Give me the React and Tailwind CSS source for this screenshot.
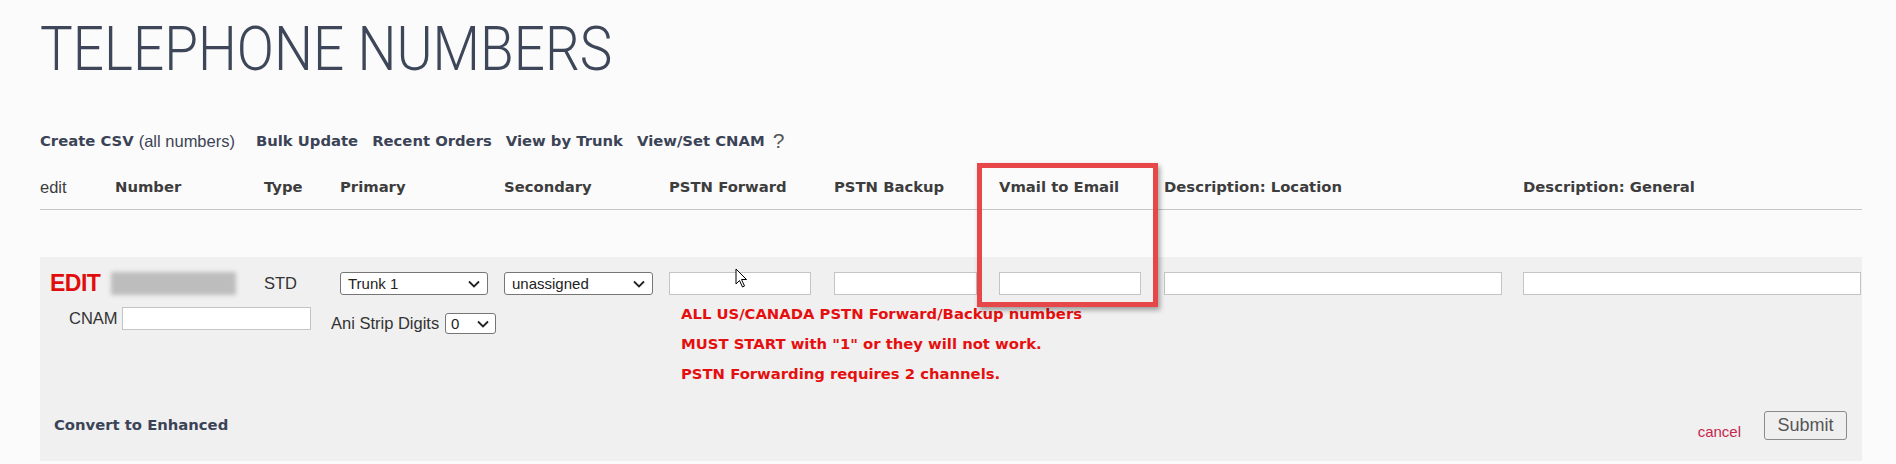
import React from "react";

const cols = "grid grid-cols-[75px_149px_76px_164px_165px_165px_165px_165px_359px_339px]";
const bold = { fontFamily: '"DejaVu Sans", Verdana, sans-serif' };

function Select({ value, w }) {
  return (
    <div className={`relative h-[23px] ${w} rounded-[3px] border border-[#767676] bg-white`}>
      <span className="absolute left-[7px] top-[2px] text-[15px] leading-[18px] text-[#222]">{value}</span>
      <svg className="absolute right-[7px] top-[7px]" width="12" height="8" viewBox="0 0 12 8">
        <path d="M1 1.5 L6 6.5 L11 1.5" fill="none" stroke="#222" strokeWidth="1.8" />
      </svg>
    </div>
  );
}

function Input({ w }) {
  return <div className={`h-[23px] ${w} border border-[#c4c4c4] bg-white`} />;
}

export default function App() {
  return (
    <div
      className="relative w-[1896px] h-[464px] overflow-hidden bg-[#fbfbfb]"
      style={{ fontFamily: '"Liberation Sans", Arial, sans-serif' }}
    >
      <div className="pl-[40px] w-[1862px]">
        <h1
          className="pt-[18px] h-[79px] text-[62px] leading-none font-light text-[#3e4759] origin-left scale-x-[0.885] whitespace-nowrap"
          style={{ fontFamily: 'Roboto, "Liberation Sans", sans-serif' }}
        >
          TELEPHONE NUMBERS
        </h1>

        <div className="mt-[52px] h-[20px] flex items-center leading-[20px] text-[#3b4356]">
          <span className="font-bold text-[14.8px]" style={bold}>Create CSV</span>
          <span className="ml-[5px] text-[16.5px]">(all numbers)</span>
          <span className="font-bold ml-[21px] text-[14.8px]" style={bold}>Bulk Update</span>
          <span className="font-bold ml-[14px] text-[14.8px]" style={bold}>Recent Orders</span>
          <span className="font-bold ml-[14px] text-[14.8px]" style={bold}>View by Trunk</span>
          <span className="font-bold ml-[14px] text-[14.8px]" style={bold}>View/Set CNAM</span>
          <span className="ml-[8px] text-[21px] font-light text-[#555]">?</span>
        </div>

        <div className={`${cols} mt-[26px] h-[33px] border-b border-[#c6c6c6] leading-[20px] text-[#3d3d3d]`}>
          <span className="text-[16.5px]">edit</span>
          {["Number", "Type", "Primary", "Secondary", "PSTN Forward", "PSTN Backup", "Vmail to Email", "Description: Location", "Description: General"].map((h) => (
            <span key={h} className="font-bold text-[14.8px]" style={bold}>{h}</span>
          ))}
        </div>

        <div className="mt-[47px] bg-[#f0f0f0] pt-[14px] pb-[16px]">
          <div className={`${cols} items-center h-[23px]`}>
            <span className="pl-[10px] text-[23px] font-bold text-[#e10d0d] tracking-[-0.5px] leading-none">EDIT</span>
            <div className="-ml-[4px] h-[23px] w-[125px] bg-[#bdbdbd] blur-[2px]" />
            <span className="text-[16.5px] text-[#333]">STD</span>
            <Select value="Trunk 1" w="w-[148px]" />
            <Select value="unassigned" w="w-[149px]" />
            <Input w="w-[142px]" />
            <Input w="w-[143px]" />
            <Input w="w-[142px]" />
            <Input w="w-[338px]" />
            <Input w="w-[338px]" />
          </div>

          <div className="mt-[3px] flex items-start">
            <div className="w-[82px] pl-[29px] mt-[10px] h-[23px] flex items-center text-[16.5px] text-[#333]">CNAM</div>
            <div className="mt-[10px]"><Input w="w-[189px]" /></div>
            <div className="ml-[20px] mt-[14px] w-[165px] flex items-center text-[16.5px] text-[#333]">
              <span>Ani Strip Digits</span>
              <div className="ml-auto">
                <div className="relative h-[21px] w-[51px] rounded-[3px] border border-[#767676] bg-white">
                  <span className="absolute left-[5px] top-[1px] text-[15px] leading-[18px] text-[#222]">0</span>
                  <svg className="absolute right-[6px] top-[6px]" width="12" height="8" viewBox="0 0 12 8">
                    <path d="M1 1.5 L6 6.5 L11 1.5" fill="none" stroke="#222" strokeWidth="1.8" />
                  </svg>
                </div>
              </div>
            </div>
            <div className="ml-[185px] mt-[2px] text-[14.8px] font-bold leading-[30px] text-[#e60f0f]" style={bold}>
              <div>ALL US/CANADA PSTN Forward/Backup numbers</div>
              <div>MUST START with "1" or they will not work.</div>
              <div>PSTN Forwarding requires 2 channels.</div>
            </div>
          </div>

          <div className="mt-[16px] h-[40px] flex items-center">
            <span className="pl-[14px] text-[14.8px] font-bold text-[#3b4356]" style={bold}>Convert to Enhanced</span>
            <span className="ml-auto pt-[14px] text-[15px] text-[#c7254e]">cancel</span>
            <button className="ml-[23px] mr-[15px] h-[29px] w-[83px] rounded-[3px] border border-[#8a8a8a] bg-[#efefef] text-[18px] text-[#555]">
              Submit
            </button>
          </div>
        </div>
      </div>

      <div className="absolute left-[977px] top-[163px] w-[181px] h-[144px] border-[5px] border-[#e8474a] shadow-[2px_3px_5px_rgba(0,0,0,0.35)]" />

      <svg className="absolute left-[735px] top-[268px]" width="14" height="20" viewBox="0 0 14 20">
        <path d="M1 1 L1 16 L4.5 12.5 L7.5 19 L9.5 18 L6.5 11.5 L11.5 11.5 Z" fill="#fff" stroke="#000" strokeWidth="1" />
      </svg>
    </div>
  );
}
